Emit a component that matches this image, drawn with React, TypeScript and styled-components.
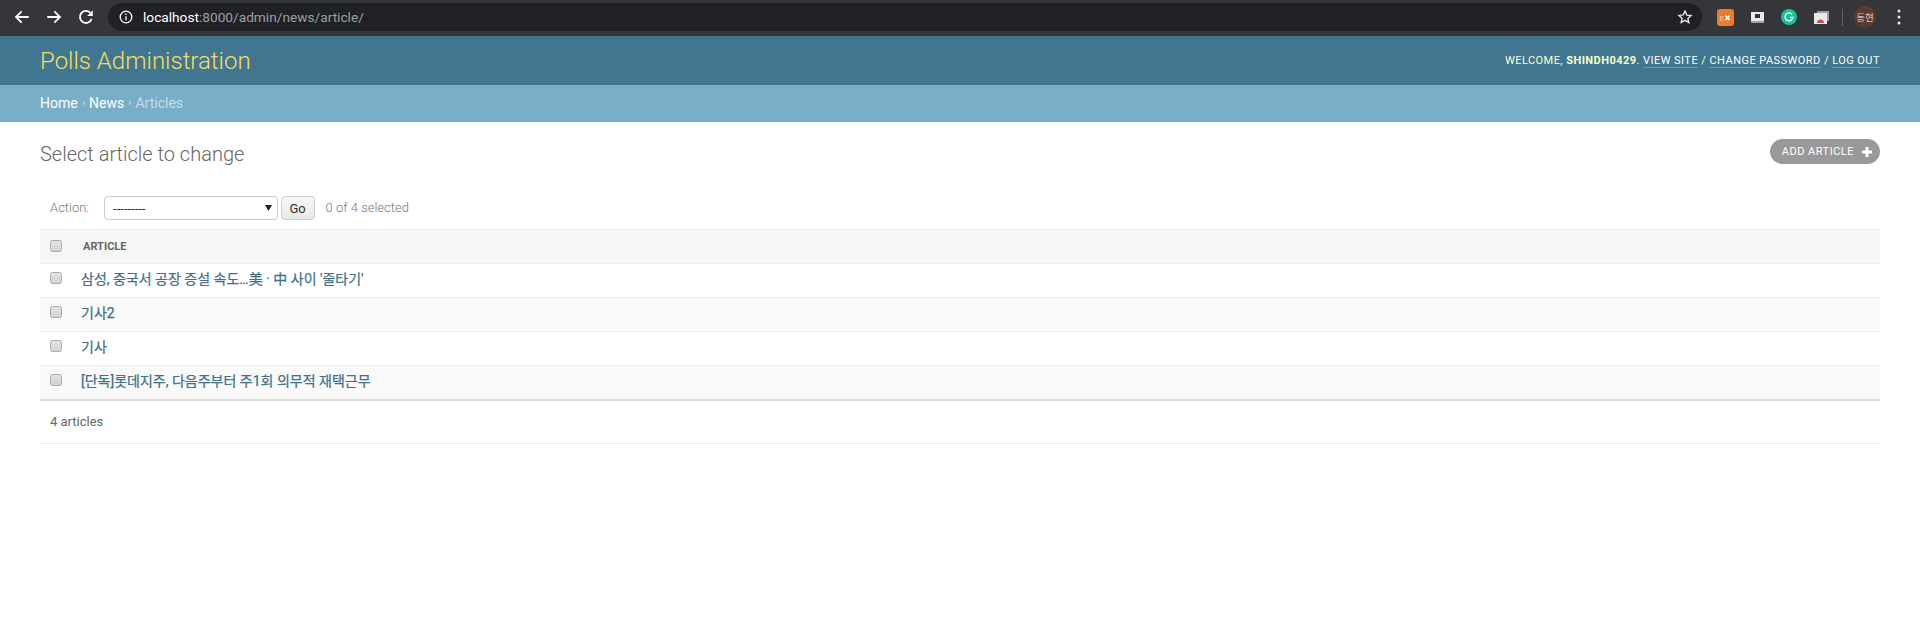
import React from "react";
import styled, { createGlobalStyle } from "styled-components";

const Global = createGlobalStyle`
  html, body { margin: 0; padding: 0; background: #fff; }
  body { font-family: Roboto, "Noto Sans CJK KR", "Lucida Grande", Verdana, Arial, sans-serif; font-size: 14px; color: #333; }
  * { box-sizing: border-box; }
`;

const Page = styled.div`
  width: 1920px;
  height: 637px;
  overflow: hidden;
  background: #fff;
`;

const Chrome = styled.div`
  height: 36px;
  background: #35363a;
  display: flex;
  align-items: center;
  padding: 0 0 2px 13px;
`;
const NavIcon = styled.svg`
  width: 18px;
  height: 18px;
  flex: none;
  margin-right: 14px;
  &:nth-child(3) { margin-right: 13px; }
`;
const Omnibox = styled.div`
  flex: none;
  width: 1594px;
  height: 28px;
  border-radius: 14px;
  background: #202124;
  display: flex;
  align-items: center;
  padding: 0 9px 0 11px;
  font-family: Roboto, sans-serif;
  font-size: 13.7px;
  color: #9aa0a6;
`;
const UrlHost = styled.span`
  color: #fff;
`;
const Url = styled.div`
  flex: 1;
  margin-left: 10px;
  white-space: nowrap;
`;
const Tray = styled.div`
  flex: 1;
  display: flex;
  align-items: center;
  padding-left: 7px;
`;
const ExtSlot = styled.div`
  width: 32px;
  height: 20px;
  display: flex;
  align-items: center;
  justify-content: center;
`;
const ToolbarSep = styled.div`
  width: 1px;
  height: 17px;
  background: #5f6368;
  margin: 0 11px 0 5px;
`;
const Avatar = styled.div`
  width: 22px;
  height: 22px;
  border-radius: 50%;
  background: #5a3a32;
  color: #d8c8c2;
  font-family: "Noto Sans CJK KR", sans-serif;
  font-size: 9.5px;
  display: flex;
  align-items: center;
  justify-content: center;
`;
const Kebab = styled.svg`
  width: 6px;
  height: 16px;
  margin-left: 20px;
`;

const Header = styled.header`
  height: 49px;
  background: #417690;
  display: flex;
  align-items: center;
  justify-content: space-between;
  padding: 0 40px;
  color: #ffc;
`;
const Branding = styled.h1`
  margin: 0;
  font-size: 24px;
  font-weight: 300;
  color: #f5dd5d;
  line-height: 26px;
`;
const UserTools = styled.div`
  font-size: 11px;
  letter-spacing: 0.46px;
  text-transform: uppercase;
  font-weight: 400;
  line-height: 13px;
  color: #ffc;
`;
const UserName = styled.strong`
  font-weight: 700;
`;
const UserLink = styled.a`
  color: #fff;
  text-decoration: none;
  border-bottom: 1px solid rgba(255, 255, 255, 0.25);
`;

const Crumbs = styled.nav`
  height: 37px;
  background: #79aec8;
  padding: 0 40px 2px;
  display: flex;
  align-items: center;
  font-size: 14px;
  color: #c4dce8;
  gap: 4px;
`;
const CrumbLink = styled.a`
  color: #fff;
`;
const CrumbSep = styled.span`
  font-size: 11px;
`;

const Content = styled.main`
  padding: 19px 40px 0;
`;
const TitleRow = styled.div`
  display: flex;
  justify-content: space-between;
  align-items: flex-start;
  height: 41px;
`;
const Title = styled.h2`
  margin: 0;
  font-size: 20px;
  line-height: 26px;
  font-weight: 300;
  color: #666;
`;
const AddButton = styled.a`
  display: flex;
  align-items: center;
  height: 25px;
  margin-top: -2px;
  padding: 0 7px 0 12px;
  border-radius: 13px;
  background: #999;
  color: #fff;
  font-size: 11px;
  font-weight: 400;
  letter-spacing: 0.5px;
  text-transform: uppercase;
`;
const PlusIcon = styled.svg`
  width: 12px;
  height: 12px;
  margin-left: 7px;
`;
const Actions = styled.div`
  height: 40px;
  padding: 0 10px;
  display: flex;
  align-items: center;
  font-size: 13px;
  font-weight: 300;
  color: #777;
  margin: 6px 0 1px;
`;
const ActionLabel = styled.span`
  margin: 0 14.5px 1px 0;
`;
const StatusText = styled.span`
  margin-bottom: 1px;
`;
const FakeSelect = styled.div`
  width: 174px;
  height: 24px;
  border: 1px solid #ccc;
  border-radius: 4px;
  background: #fff;
  display: flex;
  align-items: center;
  justify-content: space-between;
  padding: 0 5px 0 8.5px;
  font-size: 13px;
  font-weight: 400;
  color: #333;
`;
const Caret = styled.svg`
  width: 7px;
  height: 6px;
`;
const GoButton = styled.button`
  margin: 0 11px 0 3px;
  width: 34px;
  height: 24px;
  padding: 1px 0 0;
  border: 1px solid #ccc;
  border-radius: 4px;
  background: linear-gradient(#f8f8f8, #e8e8e8);
  font-family: inherit;
  font-size: 13px;
  color: #333;
`;
const Table = styled.div`
  border-top: 1px solid #eee;
`;
const Row = styled.div<{ $shaded?: boolean; $head?: boolean }>`
  height: 34px;
  display: flex;
  align-items: center;
  padding: 0 0 ${(p) => (p.$head ? "2px" : "5px")} 10px;
  background: ${(p) => (p.$head ? "#f6f6f6" : p.$shaded ? "#f9f9f9" : "#fff")};
  border-bottom: 1px solid #eee;
`;
const Check = styled.span`
  display: block;
  width: 12px;
  height: 12px;
  border: 1px solid #aaa;
  border-radius: 2.5px;
  background: linear-gradient(#e4e4e4, #d2d2d2);
`;
const HeadLabel = styled.span`
  margin: 2px 0 0 21px;
  font-size: 11px;
  font-weight: 700;
  color: #666;
  text-transform: uppercase;
`;
const ArticleLink = styled.a`
  margin-left: 19px;
  font-size: 14px;
  font-weight: 400;
  color: #3f7089;
  white-space: nowrap;
  -webkit-text-stroke: 0.25px #3f7089;
`;
const LastRow = styled(Row)`
  border-bottom: 2px solid #ddd;
  height: 35px;
`;
const Paginator = styled.div`
  height: 43px;
  padding: 0 10px 1px;
  display: flex;
  align-items: center;
  font-size: 13px;
  color: #666;
  border-bottom: 1px solid #eee;
`;

const articles = [
  "삼성, 중국서 공장 증설 속도…美 · 中 사이 '줄타기'",
  "기사2",
  "기사",
];

export default function App() {
  return (
    <Page>
      <Global />
      <Chrome>
        <NavIcon viewBox="0 0 24 24" fill="none" stroke="#fff" strokeWidth="2.4">
          <path d="M21 12H4M11.5 4.5 4 12l7.5 7.5" />
        </NavIcon>
        <NavIcon viewBox="0 0 24 24" fill="none" stroke="#fff" strokeWidth="2.4">
          <path d="M3 12h17M12.5 4.5 20 12l-7.5 7.5" />
        </NavIcon>
        <NavIcon viewBox="0 0 24 24" fill="none" stroke="#fff" strokeWidth="2.4">
          <path d="M19.5 14.5A8 8 0 1 1 17.6 6.3" />
          <path d="M21 3v7.5h-7.5z" fill="#fff" stroke="none" />
        </NavIcon>
        <Omnibox>
          <svg width="14" height="14" viewBox="0 0 14 14" fill="none" stroke="#fff" strokeWidth="1.3">
            <circle cx="7" cy="7" r="5.8" />
            <path d="M7 6.2v4M7 3.6v1.4" />
          </svg>
          <Url>
            <UrlHost>localhost</UrlHost>:8000/admin/news/article/
          </Url>
          <svg width="16" height="16" viewBox="0 0 24 24" fill="none" stroke="#e8eaed" strokeWidth="2">
            <path d="M12 3.2l2.7 5.9 6.4.7-4.8 4.3 1.4 6.3L12 17l-5.7 3.2 1.4-6.3-4.8-4.3 6.4-.7z" />
          </svg>
        </Omnibox>
        <Tray>
          <ExtSlot>
            <svg width="17" height="17" viewBox="0 0 17 17">
              <rect width="17" height="17" rx="3" fill="#ee7a2c" />
              <text x="2.500" y="11.500" fontFamily="Roboto, sans-serif" fontSize="8" fill="#f7c9a3">E</text>
              <path d="M8.500 6.500l4 4.500M12.500 6.500l-4 4.500" stroke="#fff" strokeWidth="1.5" />
            </svg>
          </ExtSlot>
          <ExtSlot>
            <svg width="13" height="11" viewBox="0 0 13 11">
              <rect width="13" height="9" fill="#e8eaed" />
              <rect x="4" y="2" width="5" height="4" fill="#35363a" />
              <rect y="9" width="13" height="2" fill="#9aa0a6" />
            </svg>
          </ExtSlot>
          <ExtSlot>
            <svg width="16" height="16" viewBox="0 0 16 16">
              <circle cx="8" cy="8" r="8" fill="#15c39a" />
              <path d="M11.200 5.300A4 4 0 1 0 12 8.500H9" fill="none" stroke="#fff" strokeWidth="1.3" />
            </svg>
          </ExtSlot>
          <ExtSlot>
            <svg width="15" height="13" viewBox="0 0 15 13">
              <rect x="3" y="0" width="12" height="10" fill="#9aa0a6" />
              <rect x="0" y="2" width="13" height="11" fill="#e8eaed" />
              <path d="M3 12a3.500 3.500 0 0 1 7 0z" fill="#e04a3a" />
              <path d="M5 12a1.500 1.500 0 0 1 3 0z" fill="#3a7ee0" />
            </svg>
          </ExtSlot>
          <ToolbarSep />
          <Avatar>동현</Avatar>
          <Kebab viewBox="0 0 6 16" fill="#e8eaed">
            <circle cx="3" cy="2" r="1.500" />
            <circle cx="3" cy="8" r="1.500" />
            <circle cx="3" cy="14" r="1.500" />
          </Kebab>
        </Tray>
      </Chrome>
      <Header>
        <Branding>Polls Administration</Branding>
        <UserTools>
          Welcome, <UserName>shindh0429</UserName>. <UserLink>View site</UserLink> /{" "}
          <UserLink>Change password</UserLink> / <UserLink>Log out</UserLink>
        </UserTools>
      </Header>
      <Crumbs>
        <CrumbLink>Home</CrumbLink>
        <CrumbSep>›</CrumbSep>
        <CrumbLink>News</CrumbLink>
        <CrumbSep>›</CrumbSep>
        <span>Articles</span>
      </Crumbs>
      <Content>
        <TitleRow>
          <Title>Select article to change</Title>
          <AddButton>
            Add article
            <PlusIcon viewBox="0 0 12 12" fill="#fff">
              <path d="M4.500 1h3v3.500H11v3H7.500V11h-3V7.500H1v-3h3.500z" />
            </PlusIcon>
          </AddButton>
        </TitleRow>
        <Actions>
          <ActionLabel>Action:</ActionLabel>
          <FakeSelect>
            ---------
            <Caret viewBox="0 0 7 6" fill="#222">
              <path d="M0 0h7L3.500 6z" />
            </Caret>
          </FakeSelect>
          <GoButton>Go</GoButton>
          <StatusText>0 of 4 selected</StatusText>
        </Actions>
        <Table>
          <Row $head>
            <Check />
            <HeadLabel>Article</HeadLabel>
          </Row>
          {articles.map((a, i) => (
            <Row key={a} $shaded={i % 2 === 1}>
              <Check />
              <ArticleLink>{a}</ArticleLink>
            </Row>
          ))}
          <LastRow $shaded>
            <Check />
            <ArticleLink>[단독]롯데지주, 다음주부터 주1회 의무적 재택근무</ArticleLink>
          </LastRow>
        </Table>
        <Paginator>4 articles</Paginator>
      </Content>
    </Page>
  );
}
